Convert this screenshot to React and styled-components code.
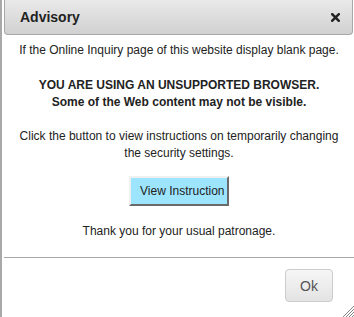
import React from "react";
import styled, { createGlobalStyle } from "styled-components";

const Global = createGlobalStyle`
  html, body { margin: 0; padding: 0; background: #fff; overflow: hidden; }
  body { font-family: "Liberation Sans", Arial, sans-serif; }
`;

const Dialog = styled.div`
  position: relative;
  width: 354px;
  height: 317px;
  box-sizing: border-box;
  border-left: 2px solid #a9a9a9;
  padding-left: 2px;
  display: flex;
  flex-direction: column;
  background: #fff;
`;

const Header = styled.div`
  height: 34px;
  margin-right: 1px;
  box-sizing: content-box;
  display: flex;
  align-items: center;
  justify-content: space-between;
  padding: 0 12px 0 15px;
  background: linear-gradient(#e9e9e9, #d1d1d1);
  border: 1px solid #a8a8a8;
  border-top: none;
  border-radius: 0 0 4px 4px;
`;

const Title = styled.span`
  font-size: 14px;
  font-weight: bold;
  color: #222;
`;

const CloseIcon = styled.svg`
  width: 9px;
  height: 9px;
`;

const Content = styled.div`
  display: flex;
  flex-direction: column;
  align-items: center;
  padding: 7px 0 0;
  height: 222px;
  box-sizing: border-box;
`;

const Para = styled.p`
  margin: 0 0 ${(p) => p.$gap}px;
  font-size: 12px;
  line-height: 17px;
  color: #222;
  text-align: center;
  font-weight: ${(p) => (p.$bold ? "bold" : "normal")};
`;

const InstructionButton = styled.button`
  width: 100px;
  height: 30px;
  margin: 0 0 17px;
  padding: 0 0 0 9px;
  box-sizing: border-box;
  background: #9de5ff;
  border: 2px solid;
  border-color: #f0f0f0 #6a6a6a #6a6a6a #f0f0f0;
  font-family: "Liberation Sans", Arial, sans-serif;
  font-size: 12px;
  color: #222;
  white-space: nowrap;
  overflow: hidden;
  text-align: left;
`;

const Divider = styled.hr`
  margin: 0;
  border: none;
  border-top: 1px solid #a8a8a8;
`;

const Footer = styled.div`
  display: flex;
  justify-content: flex-end;
  padding: 11px 21px 0 0;
`;

const OkButton = styled.button`
  width: 48px;
  height: 33px;
  box-sizing: border-box;
  border: 1px solid #cccccc;
  border-radius: 4px;
  background: linear-gradient(#f6f6f6 0%, #ededed 50%, #e3e3e3 100%);
  font-family: "Liberation Sans", Arial, sans-serif;
  font-size: 14px;
  color: #555;
  padding: 0;
`;

const Grip = styled.svg`
  position: absolute;
  right: 0;
  bottom: 0;
  width: 13px;
  height: 13px;
`;

export default function App() {
  return (
    <>
      <Global />
      <Dialog>
        <Header>
          <Title>Advisory</Title>
          <CloseIcon viewBox="0 0 9 9">
            <path d="M1.2 1.2 L7.8 7.8 M7.8 1.2 L1.2 7.8" stroke="#222" strokeWidth="2.4" strokeLinecap="square" />
          </CloseIcon>
        </Header>
        <Content>
          <Para $gap={18}>If the Online Inquiry page of this website display blank page.</Para>
          <Para $bold $gap={17}>
            YOU ARE USING AN UNSUPPORTED BROWSER.
            <br />
            Some of the Web content may not be visible.
          </Para>
          <Para $gap={14}>
            Click the button to view instructions on temporarily changing
            <br />
            the security settings.
          </Para>
          <InstructionButton>View Instruction</InstructionButton>
          <Para $gap={0}>Thank you for your usual patronage.</Para>
        </Content>
        <Divider />
        <Footer>
          <OkButton>Ok</OkButton>
        </Footer>
        <Grip viewBox="0 0 13 13">
          <path d="M13 2 L2 13 M13 5 L5 13 M13 8 L8 13 M13 11 L11 13" stroke="#777" strokeWidth="0.9" />
        </Grip>
      </Dialog>
    </>
  );
}
